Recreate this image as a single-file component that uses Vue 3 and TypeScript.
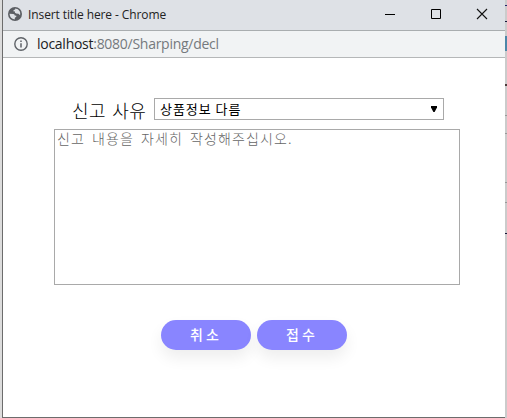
<script setup lang="ts">
import { ref } from 'vue'

const reasons: string[] = ['상품정보 다름']
const reason = ref<string>(reasons[0])
const content = ref<string>('')
const actions: string[] = ['취소', '접수']
</script>

<template>
  <div class="desktop">
    <div class="window">
      <header class="titlebar">
        <svg class="globe" width="14" height="14" viewBox="0 0 14 14">
          <circle cx="7" cy="7" r="7" fill="#5b5e63" />
          <path
            d="M1.5 6.8 L5.3 6.9 Q6.9 7.2 6.7 8.6 L8.4 8.8 Q8.6 10.3 7 10.6 L6.6 12.4 Q2 12 1.5 6.8 Z M7.2 1.5 Q10.4 1.7 11.7 4.2 Q12.8 6.5 12.1 8.3 L10.4 6.7 L8.2 6.4 Q6.3 5.9 7 4.5 L5.3 4.2 Q5.3 2.8 7.2 2.6 Z"
            fill="#dee1e6"
          />
        </svg>
        <span class="title">Insert title here - Chrome</span>
        <div class="controls">
          <svg width="12" height="12" viewBox="0 0 12 12"><path d="M1 6.5H11" stroke="#000" /></svg>
          <svg width="12" height="12" viewBox="0 0 12 12"><path d="M1.5 1.5H10.5V10.5H1.5Z" fill="none" stroke="#000" /></svg>
          <svg width="12" height="12" viewBox="0 0 12 12"><path d="M1 1L11 11M11 1L1 11" stroke="#111" stroke-width="1.1" /></svg>
        </div>
      </header>
      <div class="address">
        <svg width="14" height="14" viewBox="0 0 14 14">
          <circle cx="7" cy="7" r="6.2" fill="none" stroke="#5f6368" stroke-width="1.4" />
          <path d="M7 6.2V10.4M7 3.5V5" stroke="#5f6368" stroke-width="1.5" />
        </svg>
        <span class="url"><span class="host">localhost</span>:8080/Sharping/decl</span>
      </div>
      <main class="page">
        <div class="reason">
          <label for="reason">신고 사유</label>
          <div class="picker">
            <select id="reason" v-model="reason">
              <option v-for="item in reasons" :key="item" :value="item">{{ item }}</option>
            </select>
            <svg class="arrow" width="8" height="6" viewBox="0 0 8 6"><path d="M1 0H7V1.5L4.6 6H3.4L1 1.5Z" fill="#000" /></svg>
          </div>
        </div>
        <textarea v-model="content" placeholder="신고 내용을 자세히 작성해주십시오."></textarea>
        <div class="actions">
          <button v-for="action in actions" :key="action" type="button">{{ action }}</button>
        </div>
      </main>
    </div>
    <aside class="edge">
      <i class="mark m1"></i><i class="mark m2"></i><i class="mark tab"></i>
      <i class="mark m3"></i><i class="mark m4 soft"></i><i class="mark m5 soft"></i>
      <i class="mark m6 soft"></i><i class="mark m7 soft"></i><i class="mark m8"></i>
    </aside>
  </div>
</template>

<style>
body {
  margin: 0;
  overflow: hidden;
}
</style>

<style scoped>
.desktop {
  display: flex;
  box-sizing: border-box;
  width: 507px;
  height: 418px;
  padding-left: 2px;
  background: #dcdcdc;
  font-family: 'Noto Sans CJK KR', sans-serif;
}
.window {
  display: flex;
  flex-direction: column;
  box-sizing: border-box;
  width: 503px;
  border-left: 1px solid #6c6c6c;
  border-bottom: 1px solid #6c6c6c;
  background: #fff;
}
.titlebar {
  display: flex;
  align-items: center;
  box-sizing: border-box;
  height: 31px;
  padding: 0 17px 0 5px;
  border-bottom: 1px solid #a9adaf;
  background: #dee1e6;
}
.globe {
  margin-top: -2px;
}
.title {
  margin-left: 6px;
  color: #222;
  font-family: 'Open Sans', 'Noto Sans', sans-serif;
  font-size: 12px;
  line-height: 16px;
  letter-spacing: -0.1px;
  white-space: nowrap;
}
.controls {
  display: flex;
  gap: 34px;
  margin: -2px 0 0 auto;
}
.address {
  display: flex;
  align-items: center;
  box-sizing: border-box;
  height: 27px;
  padding-left: 11px;
  border-bottom: 1px solid #b5b7b8;
  background: #f1f3f4;
}
.url {
  margin-left: 9px;
  color: #75797d;
  font-family: 'Open Sans', 'Noto Sans', sans-serif;
  font-size: 14px;
  line-height: 18px;
  letter-spacing: -0.27px;
}
.host {
  color: #202124;
}
.page {
  display: flex;
  flex-direction: column;
  padding: 40px 0 0 51px;
}
.reason {
  display: flex;
  align-items: center;
  height: 22px;
  padding-left: 18px;
}
label {
  width: 82px;
  margin-top: 1px;
  color: #000;
  font-size: 18px;
  font-weight: 300;
  line-height: 22px;
  letter-spacing: 0.4px;
  word-spacing: 2px;
  white-space: nowrap;
}
.picker {
  position: relative;
  width: 290px;
  height: 22px;
}
select {
  display: block;
  appearance: none;
  box-sizing: border-box;
  width: 290px;
  height: 22px;
  padding: 0 5px 2px;
  border: 1px solid #a9a9a9;
  border-radius: 0;
  background: #fff;
  color: #000;
  font-family: inherit;
  font-size: 13px;
  letter-spacing: 0.95px;
}
.arrow {
  position: absolute;
  top: 8px;
  right: 6px;
}
textarea {
  box-sizing: border-box;
  width: 406px;
  height: 156px;
  margin: 9px 0 0;
  padding: 0 2px;
  border: 1px solid #a9a9a9;
  background: #fff;
  font-family: 'Noto Sans CJK KR', sans-serif;
  font-size: 14px;
  font-weight: 300;
  line-height: 17px;
  letter-spacing: 1.12px;
  word-spacing: 2.75px;
  resize: none;
}
textarea::placeholder {
  color: #666;
}
.actions {
  display: flex;
  gap: 6px;
  margin: 35px 0 0 107px;
}
button {
  width: 90px;
  height: 30px;
  padding: 0 0 2px;
  border: 0;
  border-radius: 15px;
  background: #8985ff;
  box-shadow: 0 8px 15px rgba(0, 0, 0, 0.07);
  color: #fff;
  font-family: inherit;
  font-size: 14px;
  font-weight: 500;
  letter-spacing: 3px;
}
.edge {
  position: relative;
  width: 2px;
  background: #cbcbcb;
}
.mark {
  position: absolute;
  left: 0;
  width: 2px;
  height: 1px;
  background: #16163a;
}
.soft {
  background: #999;
}
.m1 { top: 5px; background: #23236a; }
.m2 { top: 21px; }
.tab {
  top: 36px;
  height: 15px;
  background: #4b86a8;
}
.m3 { top: 84px; height: 2px; background: #4b3a3a; }
.m4 { top: 115px; }
.m5 { top: 133px; }
.m6 { top: 182px; }
.m7 { top: 202px; }
.m8 { top: 233px; }
</style>
